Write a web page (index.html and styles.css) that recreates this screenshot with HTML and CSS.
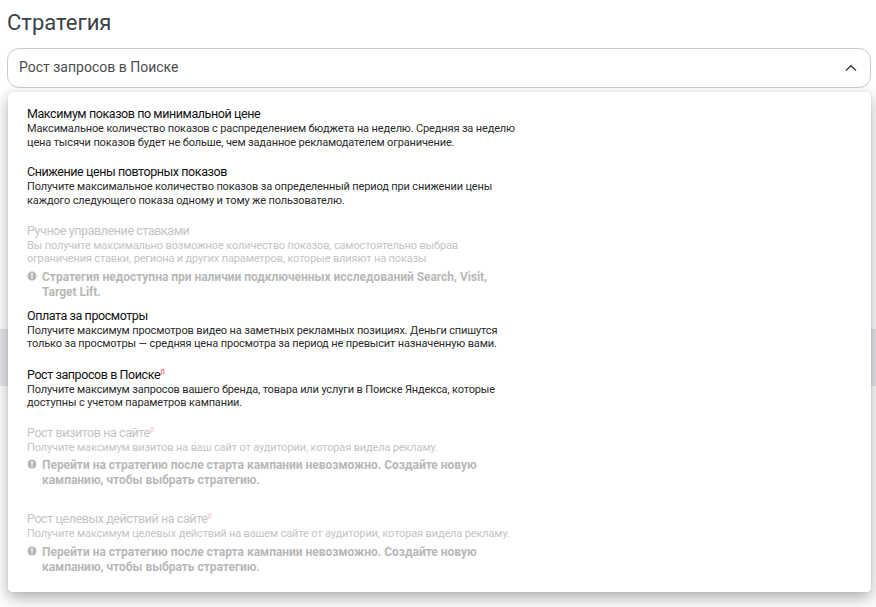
FILE: index.html
```html
<!DOCTYPE html>
<html lang="ru">
<head>
<meta charset="utf-8">
<title>Стратегия</title>
<link rel="stylesheet" href="styles.css">
</head>
<body>
<div class="band"></div>
<h1 class="title">Стратегия</h1>
<div class="select">
  <span class="value">Рост запросов в Поиске</span>
  <svg class="chev" width="12" height="8" viewBox="0 0 12 8"><path d="M1 6.5 6 1.7l5 4.8" fill="none" stroke="#333" stroke-width="1.2"/></svg>
</div>
<div class="menu">
  <div class="item">
    <div class="name">Максимум показов по минимальной цене</div>
    <div class="desc">Максимальное количество показов с распределением бюджета на неделю. Средняя за неделю<br>цена тысячи показов будет не больше, чем заданное рекламодателем ограничение.</div>
  </div>
  <div class="item second">
    <div class="name">Снижение цены повторных показов</div>
    <div class="desc">Получите максимальное количество показов за определенный период при снижении цены<br>каждого следующего показа одному и тому же пользователю.</div>
  </div>
  <div class="item off short">
    <div class="name">Ручное управление ставками</div>
    <div class="desc">Вы получите максимально возможное количество показов, самостоятельно выбрав<br>ограничения ставки, региона и других параметров, которые влияют на показы</div>
    <div class="warn">
      <svg class="info" width="10" height="10" viewBox="0 0 10 10"><circle cx="5" cy="5" r="4.5" fill="#b5b5b5"/><rect x="4.3" y="2" width="1.4" height="3.6" fill="#fff"/><rect x="4.3" y="6.4" width="1.4" height="1.4" fill="#fff"/></svg>
      <span>Стратегия недоступна при наличии подключенных исследований Search, Visit,<br>Target Lift.</span>
    </div>
  </div>
  <div class="item view">
    <div class="name">Оплата за просмотры</div>
    <div class="desc">Получите максимум просмотров видео на заметных рекламных позициях. Деньги спишутся<br>только за просмотры — средняя цена просмотра за период не превысит назначенную вами.</div>
  </div>
  <div class="item">
    <div class="name">Рост запросов в Поиске<sup class="beta">β</sup></div>
    <div class="desc">Получите максимум запросов вашего бренда, товара или услуги в Поиске Яндекса, которые<br>доступны с учетом параметров кампании.</div>
  </div>
  <div class="item off tall">
    <div class="name">Рост визитов на сайте<sup class="beta">β</sup></div>
    <div class="desc">Получите максимум визитов на ваш сайт от аудитории, которая видела рекламу.</div>
    <div class="warn">
      <svg class="info" width="10" height="10" viewBox="0 0 10 10"><circle cx="5" cy="5" r="4.5" fill="#b5b5b5"/><rect x="4.3" y="2" width="1.4" height="3.6" fill="#fff"/><rect x="4.3" y="6.4" width="1.4" height="1.4" fill="#fff"/></svg>
      <span>Перейти на стратегию после старта кампании невозможно. Создайте новую<br>кампанию, чтобы выбрать стратегию.</span>
    </div>
  </div>
  <div class="item off">
    <div class="name">Рост целевых действий на сайте<sup class="beta">β</sup></div>
    <div class="desc">Получите максимум целевых действий на вашем сайте от аудитории, которая видела рекламу.</div>
    <div class="warn">
      <svg class="info" width="10" height="10" viewBox="0 0 10 10"><circle cx="5" cy="5" r="4.5" fill="#b5b5b5"/><rect x="4.3" y="2" width="1.4" height="3.6" fill="#fff"/><rect x="4.3" y="6.4" width="1.4" height="1.4" fill="#fff"/></svg>
      <span>Перейти на стратегию после старта кампании невозможно. Создайте новую<br>кампанию, чтобы выбрать стратегию.</span>
    </div>
  </div>
</div>
</body>
</html>
```
FILE: styles.css
```css
html, body {
  margin: 0;
  height: 607px;
  overflow: hidden;
  background: #fff;
  font-family: "Roboto", "Liberation Sans", sans-serif;
  color: #000;
}
body {
  position: relative;
  padding: 9px 5px 0 7px;
  box-sizing: border-box;
}
.band {
  position: absolute;
  left: 0;
  right: 0;
  top: 329px;
  height: 57px;
  background: #e6e8ec;
}
.title {
  position: relative;
  margin: 0 0 12px 0;
  font-size: 22px;
  line-height: 27px;
  font-weight: 400;
  color: #3b4149;
}
.select {
  position: relative;
  height: 38px;
  border: 1px solid #cbcbcb;
  border-radius: 12px;
  background: #fff;
  display: flex;
  align-items: center;
  justify-content: space-between;
  padding: 0 13px 0 11px;
  font-size: 14px;
  color: #4d4d4d;
}
.value { line-height: 18px; margin-bottom: 2px; }
.menu {
  position: relative;
  margin: 4px 0 0 1px;
  height: 500px;
  box-sizing: border-box;
  padding: 14px 0 0 19px;
  background: #fff;
  border-radius: 4px;
  box-shadow: 0 0 1px rgba(0,0,0,.25), 0 6px 16px rgba(0,0,0,.32);
}
.item { margin-bottom: 15px; }
.item.second { margin-bottom: 15.5px; }
.item.short { margin-bottom: 8px; }
.item.view { margin-bottom: 16px; }
.item.tall { margin-bottom: 23px; }
.name { font-size: 12.5px; line-height: 16px; letter-spacing: -.42px; color: #111; }
.desc { font-size: 11px; line-height: 13.5px; letter-spacing: -.14px; color: #2b2b2b; }
.beta { font-size: 8px; line-height: 0; color: #f55; }
.off .name, .off .desc { color: #c4c4c4; }
.off .beta { color: #fbc6c6; }
.warn {
  display: flex;
  gap: 5px;
  margin-top: 4px;
  font-size: 12px;
  line-height: 15px;
  font-weight: 700;
  letter-spacing: -.03px;
  color: #b8b8b8;
}
.info { flex: none; margin-top: 1px; }
```
